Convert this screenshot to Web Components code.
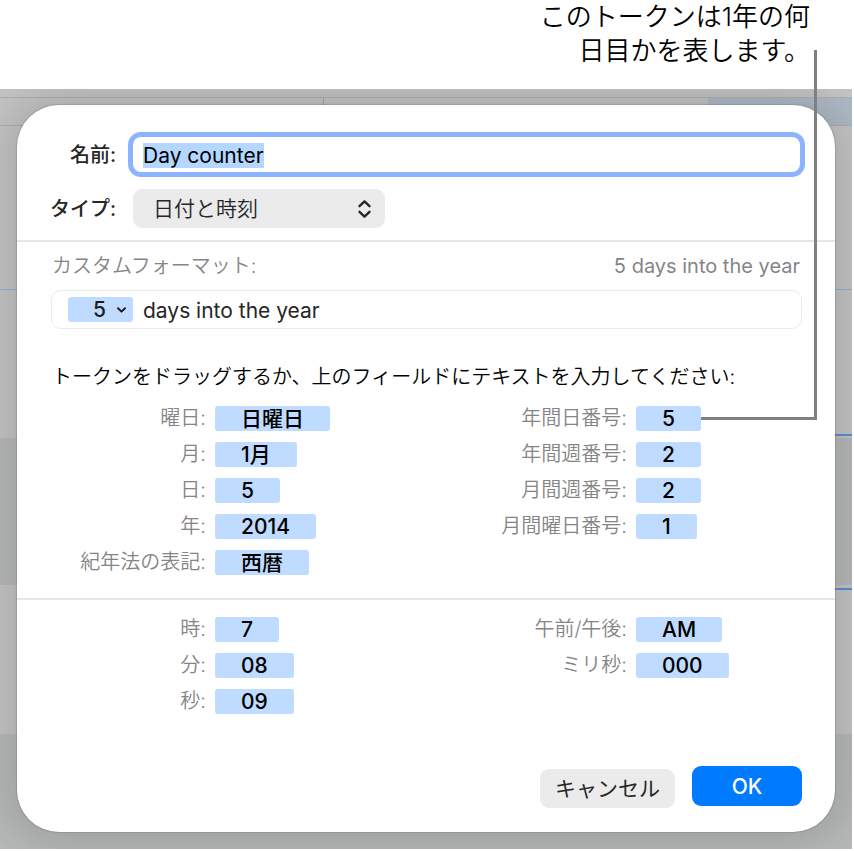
<!DOCTYPE html>
<html lang="ja">
<head>
<meta charset="utf-8">
<title>Day counter</title>
<style>
  body {
    margin: 0;
    background: #fff;
    color: #000;
    font-family: Inter, "Noto Sans CJK JP", sans-serif;
  }
</style>
</head>
<body>
<callout-figure>
  <span slot="caption">このトークンは1年の何<br>日目かを表します。</span>
  <format-dialog></format-dialog>
</callout-figure>

<script>
class CalloutFigure extends HTMLElement {
  constructor() {
    super();
    this.attachShadow({ mode: "open" });
    this.shadowRoot.innerHTML = `
    <style>
    :host
    {
        display:block;
        position:relative;
    }
    .caption
    {
        padding:0 44px 21px 16px;
        font-size:26px;
        line-height:34px;
        font-weight:350;
        text-align:right;
    }
    .backdrop
    {
        margin-right:2px;
        padding:16px 17px 17px;
        overflow:hidden;
        background:
          linear-gradient(#b0b0b0, #b0b0b0) 0 8px / 100% 1px no-repeat,
          linear-gradient(#b0b0b0, #b0b0b0) 0 36px / 100% 1px no-repeat,
          linear-gradient(#a8a8a8, #a8a8a8) 38% 9px / 1px 9px no-repeat,
          linear-gradient(#b1bbc9, #b1bbc9) right 9px / 144px 27px no-repeat,
          linear-gradient(#8fb4dc, #8fb4dc) 0 200px / 100% 1px no-repeat,
          linear-gradient(#5b8fdc, #5b8fdc) right 345px / 50% 2px no-repeat,
          linear-gradient(#5b8fdc, #5b8fdc) right 499px / 50% 2px no-repeat,
          linear-gradient(#b9bbba, #b9bbba) 0 349px / 100% 147px no-repeat,
          linear-gradient(#b9bbba, #b9bbba) 0 645px / 100% 115px no-repeat,
          #c6c6c6;
    }
    .pointer
    {
        position:absolute;
        top:50px;
        right:37px;
        width:113px;
        height:367px;
        border:solid #808080;
        border-width:0 3px 3px 0;
        pointer-events:none;
    }
    </style>
    <div class="caption"><slot name="caption"></slot></div>
    <div class="backdrop"><slot></slot></div>
    <div class="pointer"></div>
    `;
  }
}

class TokenRow extends HTMLElement {
  constructor() {
    super();
    this.attachShadow({ mode: "open" });
    this.shadowRoot.innerHTML = `
    <style>
    :host
    {
        display:grid;
        grid-template-columns:154px auto;
        column-gap:9px;
        justify-content:start;
        align-items:center;
        height:25px;
    }
    label
    {
        color:#858585;
        font-size:20px;
        line-height:25px;
        font-weight:350;
        text-align:right;
        white-space:nowrap;
    }
    button
    {
        height:25px;
        margin:0;
        padding:0 26px;
        border:0;
        border-radius:3px;
        background:#bfdbff;
        color:#000;
        font:500 21px/25px Inter, "Noto Sans CJK JP", sans-serif;
        white-space:nowrap;
    }
    </style>
    <label for="token"></label>
    <button id="token" type="button" draggable="true"><slot></slot></button>
    `;
  }
  connectedCallback() {
    this.shadowRoot.querySelector("label").textContent = this.getAttribute("label") + ":";
  }
}

class FormatField extends HTMLElement {
  constructor() {
    super();
    this.attachShadow({ mode: "open" });
    this.shadowRoot.innerHTML = `
    <style>
    :host
    {
        display:flex;
        align-items:center;
        gap:10px;
        box-sizing:border-box;
        height:39px;
        margin-left:-1px;
        padding:0 16px;
        border:1px solid #ebebeb;
        border-radius:10px;
    }
    button
    {
        display:flex;
        align-items:center;
        gap:10px;
        height:25px;
        margin:0;
        padding:0 6px 0 25px;
        border:0;
        border-radius:3px;
        background:#bfdbff;
        color:#1c1c1e;
        font:500 21px/25px Inter, sans-serif;
    }
    input
    {
        flex:1;
        min-width:0;
        padding:2px 0 0;
        border:0;
        outline:0;
        background:none;
        color:#262626;
        font:400 21px/26px Inter, sans-serif;
    }
    </style>
    <button type="button">5
      <svg width="11" height="8" viewBox="0 0 11 8" fill="none" stroke="#1c1c1e" stroke-width="2" stroke-linecap="round" stroke-linejoin="round" aria-hidden="true"><path d="M2 2.2 5.5 5.6 9 2.2"/></svg>
    </button>
    <input type="text" value="days into the year" aria-label="カスタムフォーマット">
    `;
  }
}

class FormatDialog extends HTMLElement {
  constructor() {
    super();
    this.attachShadow({ mode: "open" });
    this.shadowRoot.innerHTML = `
    <style>
    :host
    {
        display:block;
        border-radius:42px;
        background:#fff;
        box-shadow:0 0 1px 1px rgba(0,0,0,0.12), 0 0 48px 16px rgba(0,0,0,0.14);
    }
    .general
    {
        display:grid;
        grid-template-columns:64px 1fr;
        gap:17px;
        align-items:center;
        padding:32px 35px 12px;
        border-bottom:2px solid #e5e5e5;
    }
    .general label
    {
        justify-self:end;
        color:#262626;
        font-size:20px;
        line-height:26px;
        font-weight:500;
        white-space:nowrap;
    }
    .name
    {
        box-sizing:border-box;
        width:100%;
        height:35px;
        padding:2px 10px 0;
        border:0;
        border-radius:8px;
        outline:0;
        background:#fff;
        box-shadow:0 0 0 5px #8cb4fe;
        color:#000;
        font:400 21px/26px Inter, sans-serif;
    }
    .name::selection
    {
        background:#b3d7ff;
        color:#000;
    }
    .popup
    {
        display:grid;
        width:252px;
        align-items:center;
    }
    .popup > *
    {
        grid-area:1 / 1;
    }
    select
    {
        appearance:none;
        height:39px;
        margin:0;
        padding:0 40px 0 20px;
        border:0;
        border-radius:9px;
        background:#ebebeb;
        color:#262626;
        font:350 21px/30px Inter, "Noto Sans CJK JP", sans-serif;
    }
    .popup svg
    {
        justify-self:end;
        margin-right:13px;
        pointer-events:none;
    }
    .format
    {
        display:flex;
        justify-content:space-between;
        padding:12px 35px;
        color:#858585;
        font-size:20px;
        line-height:24px;
        font-weight:350;
    }
    .preview
    {
        font-weight:400;
    }
    .tokens
    {
        padding:0 33px 23px 35px;
        border-bottom:2px solid #e5e5e5;
    }
    .hint
    {
        margin:36px 0 17px;
        font-size:20px;
        line-height:24px;
        font-weight:350;
        white-space:nowrap;
    }
    .columns
    {
        display:grid;
        grid-template-columns:421fr 329fr;
    }
    .column
    {
        display:flex;
        flex-direction:column;
        gap:11px;
    }
    .time
    {
        padding:17px 33px 0 35px;
    }
    footer
    {
        display:flex;
        justify-content:flex-end;
        gap:17px;
        height:42px;
        padding:52px 33px 24px;
    }
    footer button
    {
        height:39px;
        margin:0;
        padding:0 15px;
        border:0;
        border-radius:9px;
        background:#ebebeb;
        color:#262626;
        font:400 21px/30px Inter, "Noto Sans CJK JP", sans-serif;
    }
    .cancel
    {
        align-self:flex-end;
    }
    footer .ok
    {
        min-width:110px;
        height:40px;
        padding-top:2px;
        background:#007aff;
        color:#fff;
        font-weight:500;
    }
    </style>
    <form>
      <div class="general">
        <label for="name">名前:</label>
        <input class="name" id="name" type="text" value="Day counter">
        <label for="type">タイプ:</label>
        <div class="popup">
          <select id="type"><option>日付と時刻</option></select>
          <svg width="15" height="20" viewBox="0 0 15 20" fill="none" stroke="#262626" stroke-width="2.4" stroke-linecap="round" stroke-linejoin="round" aria-hidden="true"><path d="M2.5 7.2 7.5 2.4l5 4.8M2.5 12.8l5 4.8 5-4.8"/></svg>
        </div>
      </div>
      <div class="format">
        <span>カスタムフォーマット:</span>
        <span class="preview">5 days into the year</span>
      </div>
      <div class="tokens">
        <format-field></format-field>
        <p class="hint">トークンをドラッグするか、上のフィールドにテキストを入力してください:</p>
        <div class="columns">
          <div class="column">
            <token-row label="曜日">日曜日</token-row>
            <token-row label="月">1月</token-row>
            <token-row label="日">5</token-row>
            <token-row label="年">2014</token-row>
            <token-row label="紀年法の表記">西暦</token-row>
          </div>
          <div class="column">
            <token-row label="年間日番号">5</token-row>
            <token-row label="年間週番号">2</token-row>
            <token-row label="月間週番号">2</token-row>
            <token-row label="月間曜日番号">1</token-row>
          </div>
        </div>
      </div>
      <div class="time columns">
        <div class="column">
          <token-row label="時">7</token-row>
          <token-row label="分">08</token-row>
          <token-row label="秒">09</token-row>
        </div>
        <div class="column">
          <token-row label="午前/午後">AM</token-row>
          <token-row label="ミリ秒">000</token-row>
        </div>
      </div>
      <footer>
        <button class="cancel" type="button">キャンセル</button>
        <button class="ok" type="submit">OK</button>
      </footer>
    </form>
    `;
    const form = this.shadowRoot.querySelector("form");
    form.addEventListener("submit", (event) => event.preventDefault());
  }
  connectedCallback() {
    // The name is ready to be typed over when the dialog opens
    const name = this.shadowRoot.querySelector("#name");
    name.focus();
    name.select();
  }
}

customElements.define("token-row", TokenRow);
customElements.define("format-field", FormatField);
customElements.define("format-dialog", FormatDialog);
customElements.define("callout-figure", CalloutFigure);
</script>
</body>
</html>
